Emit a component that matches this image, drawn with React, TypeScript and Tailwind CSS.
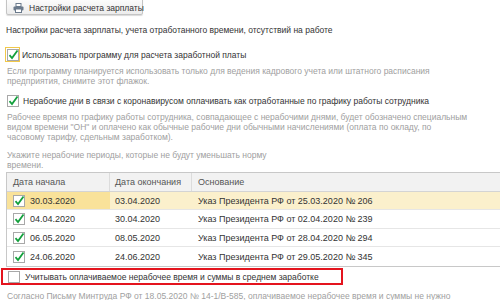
import * as React from 'react'

function Check({ on }: { on: boolean }) {
  return (
    <svg width="12" height="12" viewBox="0 0 12 12" className="shrink-0">
      <rect x="0.5" y="0.5" width="11" height="11" fill="#fff" stroke="#a8a8a8" />
      {on ? (
        <path d="M2.5 6.2 L5 9 L10.5 1.5" fill="none" stroke="#12a03c" strokeWidth="1.8" />
      ) : null}
    </svg>
  )
}

function Printer() {
  return (
    <svg width="11" height="10" viewBox="0 0 11 10" className="shrink-0">
      <rect x="3" y="0.5" width="5" height="3" fill="#fff" stroke="#6b7a8c" />
      <rect x="0.5" y="3.5" width="10" height="4" rx="1" fill="#6b7a8c" />
      <rect x="2.5" y="6" width="6" height="3.5" fill="#fff" stroke="#6b7a8c" />
    </svg>
  )
}

const rows = [
  { start: '30.03.2020', end: '03.04.2020', base: 'Указ Президента РФ от 25.03.2020 № 206', h: 'h-[18px]' },
  { start: '04.04.2020', end: '30.04.2020', base: 'Указ Президента РФ от 02.04.2020 № 239', h: 'h-[19px]' },
  { start: '06.05.2020', end: '08.05.2020', base: 'Указ Президента РФ от 28.04.2020 № 294', h: 'h-[18px]' },
  { start: '24.06.2020', end: '24.06.2020', base: 'Указ Президента РФ от 29.05.2020 № 345', h: 'h-[19px]' },
]

function App() {
  return (
    <div className="w-[500px] h-[300px] overflow-hidden bg-white text-[8.5px] leading-[10px] text-[#404040] font-['Liberation_Sans',Arial,sans-serif]">
      <div className="pl-[6px]">
        <button className="-mt-[4px] h-[19px] w-[137px] pt-[4px] flex items-center gap-[5px] pl-[6px] whitespace-nowrap border border-[#c4c4c4] rounded-[2px] bg-gradient-to-b from-white to-[#ececec] shadow-[0_1px_1px_rgba(0,0,0,0.15)] text-[#333] text-[8.5px]">
          <Printer />
          <span>Настройки расчета зарплаты</span>
        </button>
      </div>

      <div className="pl-[6px] mt-[10px] text-[#333]">
        Настройки расчета зарплаты, учета отработанного времени, отсутствий на работе
      </div>

      <div className="mt-[12px] pl-[5px] flex items-center gap-[2px] text-[#333]">
        <span className="w-[15px] h-[15px] border border-[#f1c84a] flex items-center justify-center">
          <Check on />
        </span>
        <span>Использовать программу для расчета заработной платы</span>
      </div>

      <div className="pl-[7px] mt-[4px] text-[#a0a0a0]">
        <div>Если программу планируется использовать только для ведения кадрового учета или штатного расписания</div>
        <div>предприятия, снимите этот флажок.</div>
      </div>

      <div className="mt-[9px] pl-[7px] flex items-center gap-[4px] text-[#333]">
        <Check on />
        <span>Нерабочие дни в связи с коронавирусом оплачивать как отработанные по графику работы сотрудника</span>
      </div>

      <div className="pl-[7px] mt-[5px] text-[#a0a0a0]">
        <div>Рабочее время по графику работы сотрудника, совпадающее с нерабочими днями, будет обозначено специальным</div>
        <div>видом времени "ОН" и оплачено как обычные рабочие дни обычными начислениями (оплата по окладу, по</div>
        <div>часовому тарифу, сдельным заработком).</div>
      </div>

      <div className="pl-[7px] mt-[8px] text-[#a0a0a0]">
        <div>Укажите нерабочие периоды, которые не будут уменьшать норму</div>
        <div>времени.</div>
      </div>

      <div className="ml-[6px] mt-[2px] border-t border-l border-b border-[#c8c8c8]">
        <div className="flex h-[19px] bg-[#f2f2f2] border-b border-[#d4d4d4] text-[#555] text-[9px]">
          <div className="w-[103px] pl-[6px] flex items-center border-r border-[#dcdcdc]">Дата начала</div>
          <div className="w-[82px] pl-[5px] flex items-center border-r border-[#dcdcdc]">Дата окончания</div>
          <div className="flex-1 pl-[6px] flex items-center">Основание</div>
        </div>
        {rows.map((r, i) => (
          <div
            key={r.start}
            className={
              (i === 0 ? 'bg-[#fbf0cc] ' : 'bg-white ') +
              r.h +
              ' flex border-b border-[#e6e6e6] text-[#333] text-[9px] last:border-b-0'
            }
          >
            <div
              className={
                i === 0
                  ? 'w-[103px] pl-[6px] flex items-center gap-[5px] bg-[#f9e29a]'
                  : 'w-[103px] pl-[6px] flex items-center gap-[5px]'
              }
            >
              <Check on />
              <span>{r.start}</span>
            </div>
            <div className="w-[82px] pl-[5px] flex items-center">{r.end}</div>
            <div className="flex-1 pl-[6px] flex items-center">{r.base}</div>
          </div>
        ))}
      </div>

      <div className="mt-[1px] ml-[1px] w-[342px] h-[17px] border-2 border-[#e4141e] flex items-center gap-[5px] pl-[5px] text-[#333]">
        <Check on={false} />
        <span>Учитывать оплачиваемое нерабочее время и суммы в среднем заработке</span>
      </div>

      <div className="pl-[7px] mt-[6px] text-[#a0a0a0]">
        Согласно Письму Минтруда РФ от 18.05.2020 № 14-1/В-585, оплачиваемое нерабочее время и суммы не нужно
      </div>
    </div>
  )
}

export default App
